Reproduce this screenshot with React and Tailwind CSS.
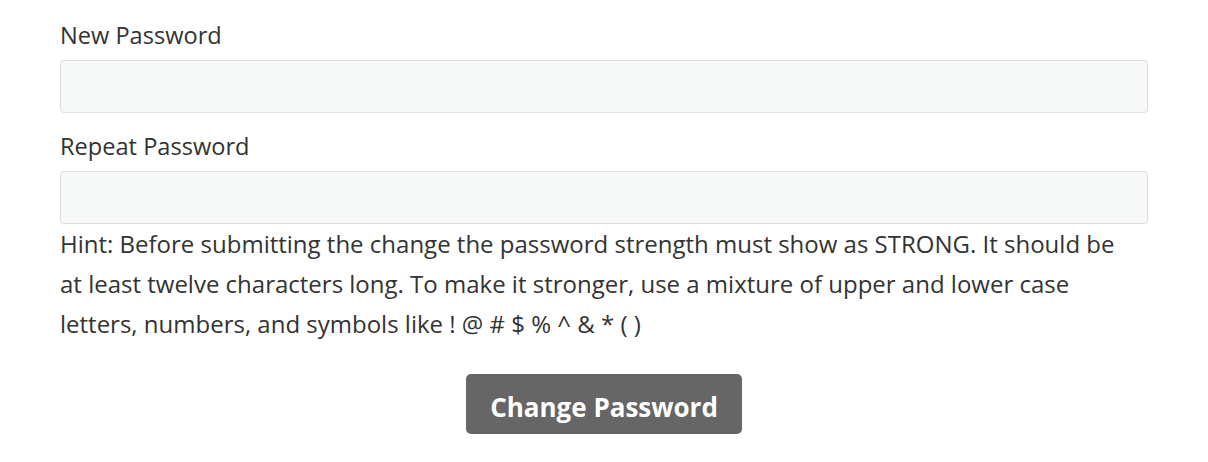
export default function App() {
  return (
    <div className="bg-white min-h-[462px] px-[60px] pt-[20px] text-[#333333]" style={{ fontFamily: '"Open Sans", "Noto Sans", sans-serif' }}>
      <form onSubmit={e => e.preventDefault()}>
        <label className="block text-[23.6px] leading-[30px] mb-[10px]">New Password</label>
        <input
          type="password"
          className="block w-full h-[53px] bg-[#f7f8f8] border border-[#dedede] rounded-[4px] px-3 text-[20px] focus:outline-none"
        />

        <label className="block text-[23.6px] leading-[30px] mt-[18px] mb-[10px]">Repeat Password</label>
        <input
          type="password"
          className="block w-full h-[53px] bg-[#f7f8f8] border border-[#dedede] rounded-[4px] px-3 text-[20px] focus:outline-none"
        />

        <p className="max-w-[1072px] text-[24px] leading-[40px]">
          Hint: Before submitting the change the password strength must show as STRONG. It should be at least twelve characters long. To make it stronger, use a mixture of upper and lower case letters, numbers, and symbols like ! @ # $ % ^ &amp; * ( )
        </p>

        <div className="flex justify-center mt-[30px]">
          <button
            type="submit"
            className="w-[276px] h-[60px] pt-[5px] bg-[#666666] text-white font-bold text-[26px] leading-[30px] rounded-[5px]"
          >
            Change Password
          </button>
        </div>
      </form>
    </div>
  );
}
